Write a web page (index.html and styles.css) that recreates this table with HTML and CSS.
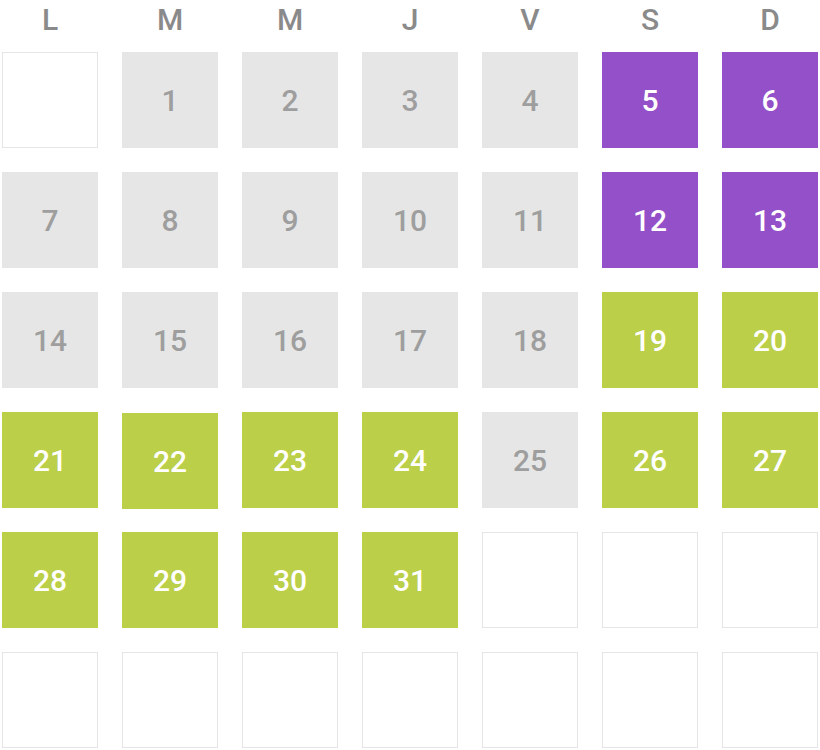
FILE: index.html
```html
<!DOCTYPE html>
<html lang="fr">
<head>
<meta charset="utf-8">
<link rel="stylesheet" href="styles.css">
</head>
<body>
<div class="cal">
  <div class="head">
    <div>L</div><div>M</div><div>M</div><div>J</div><div>V</div><div>S</div><div>D</div>
  </div>
  <div class="grid">
    <div class="day empty"></div>
    <div class="day off">1</div>
    <div class="day off">2</div>
    <div class="day off">3</div>
    <div class="day off">4</div>
    <div class="day purple">5</div>
    <div class="day purple">6</div>

    <div class="day off">7</div>
    <div class="day off">8</div>
    <div class="day off">9</div>
    <div class="day off">10</div>
    <div class="day off">11</div>
    <div class="day purple">12</div>
    <div class="day purple">13</div>

    <div class="day off">14</div>
    <div class="day off">15</div>
    <div class="day off">16</div>
    <div class="day off">17</div>
    <div class="day off">18</div>
    <div class="day green">19</div>
    <div class="day green">20</div>

    <div class="day green">21</div>
    <div class="day green pressed">22</div>
    <div class="day green">23</div>
    <div class="day green">24</div>
    <div class="day off">25</div>
    <div class="day green">26</div>
    <div class="day green">27</div>

    <div class="day green">28</div>
    <div class="day green">29</div>
    <div class="day green">30</div>
    <div class="day green">31</div>
    <div class="day empty"></div>
    <div class="day empty"></div>
    <div class="day empty"></div>

    <div class="day empty"></div>
    <div class="day empty"></div>
    <div class="day empty"></div>
    <div class="day empty"></div>
    <div class="day empty"></div>
    <div class="day empty"></div>
    <div class="day empty"></div>
  </div>
</div>
</body>
</html>
```
FILE: styles.css
```css
html, body {
  margin: 0;
  padding: 0;
  background: #ffffff;
}
body {
  font-family: Roboto, "Liberation Sans", sans-serif;
  font-weight: 500;
}
.cal {
  padding: 0 2px;
  width: 816px;
}
.head {
  display: grid;
  grid-template-columns: repeat(7, 96px);
  column-gap: 24px;
  height: 40px;
  margin-bottom: 12px;
}
.head div {
  text-align: center;
  line-height: 40px;
  font-size: 30px;
  color: #8a8a8a;
}
.grid {
  display: grid;
  grid-template-columns: repeat(7, 96px);
  grid-auto-rows: 96px;
  gap: 24px;
}
.day {
  box-sizing: border-box;
  display: flex;
  align-items: center;
  justify-content: center;
  font-size: 30px;
}
.empty {
  border: 1px solid #e5e5e5;
  background: #fff;
}
.off {
  background: #e6e6e6;
  color: #9e9e9e;
}
.purple {
  background: #9450c8;
  color: #ffffff;
}
.green {
  background: #bbcf48;
  color: #ffffff;
}
.pressed {
  transform: translateY(1px);
}
```
